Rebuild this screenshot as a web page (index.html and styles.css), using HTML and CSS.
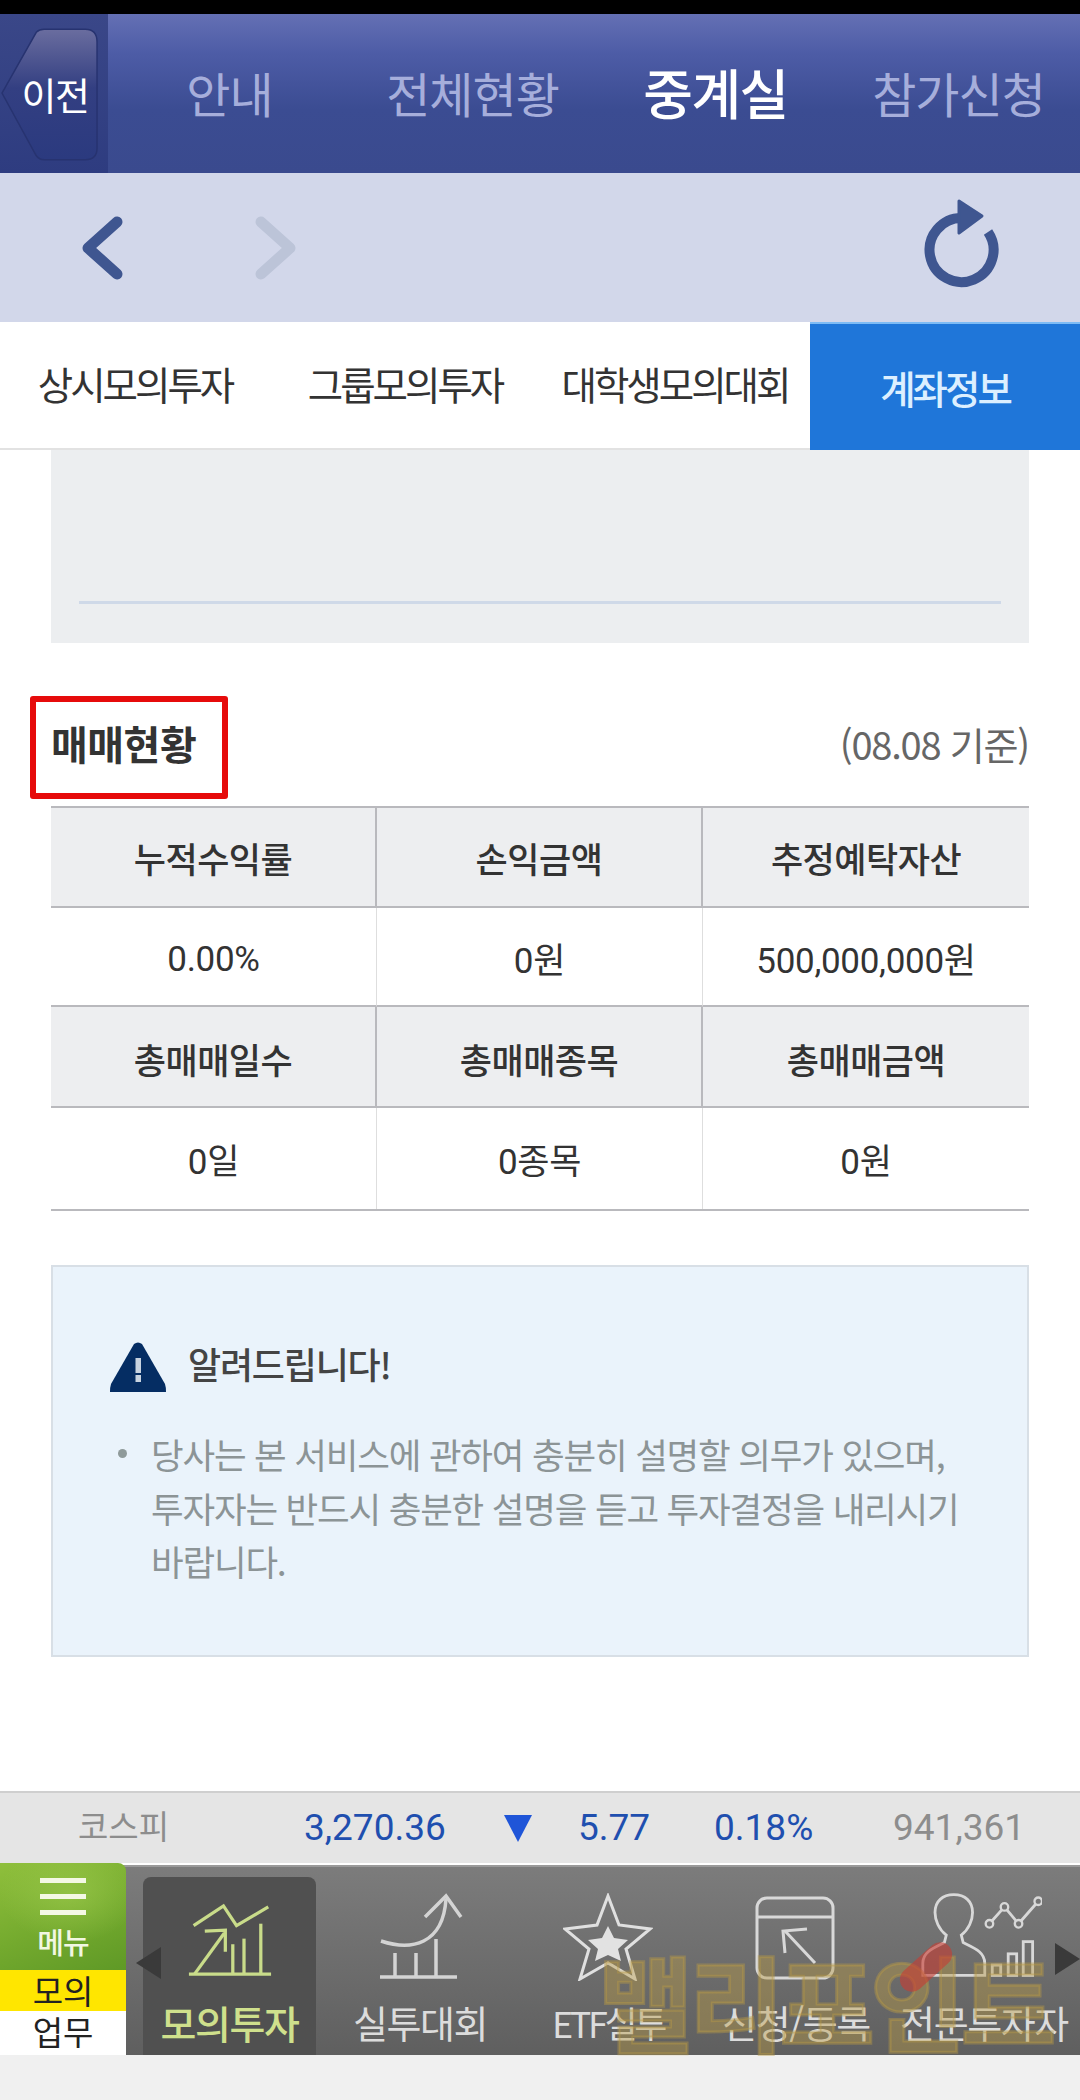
FILE: index.html
```html
<!DOCTYPE html>
<html lang="ko">
<head>
<meta charset="utf-8">
<title>중계실</title>
<link rel="stylesheet" href="styles.css">
</head>
<body>
<div class="page">
  <div class="statusbar"></div>
  <header class="topnav">
    <div class="backcell">
      <svg class="backshape" viewBox="0 0 100 136"><defs><linearGradient id="bg" x1="0" y1="0" x2="0" y2="1"><stop offset="0" stop-color="#6a6d9f"/><stop offset=".45" stop-color="#333f82"/><stop offset="1" stop-color="#2b3a7f"/></linearGradient></defs><path d="M1 66 L36 4 Q39 1 44 1 L86 1 Q98 1 98 14 L98 122 Q98 134 86 134 L44 134 Q39 134 36 130 Z" fill="url(#bg)" stroke="#273370" stroke-width="1.5"/></svg>
      <span class="backlabel">이전</span>
    </div>
    <span class="navitem">안내</span>
    <span class="navitem">전체현황</span>
    <span class="navitem navitem-on">중계실</span>
    <span class="navitem">참가신청</span>
  </header>
  <div class="toolbar">
    <svg class="chev" viewBox="0 0 44 64"><path d="M37 6 L8 32 L37 58" fill="none" stroke="#3f5690" stroke-width="11" stroke-linecap="round" stroke-linejoin="round"/></svg>
    <svg class="chev chev-next" viewBox="0 0 44 64"><path d="M7 6 L36 32 L7 58" fill="none" stroke="#bcc4d8" stroke-width="11" stroke-linecap="round" stroke-linejoin="round"/></svg>
    <svg class="refresh" viewBox="0 0 76 94"><path d="M38 21 A32 32 0 1 0 64 35" fill="none" stroke="#3f5690" stroke-width="10"/><path d="M35 4 L58 19 L35 36 Z" fill="#3f5690" stroke="#3f5690" stroke-width="3" stroke-linejoin="round"/></svg>
  </div>
  <nav class="tabs">
    <span class="tab">상시모의투자</span>
    <span class="tab">그룹모의투자</span>
    <span class="tab">대학생모의대회</span>
    <span class="tab tab-on">계좌정보</span>
  </nav>
  <main class="content">
    <div class="chartbox"><div class="chartline"></div></div>
    <div class="sectionhead">
      <h2 class="sectiontitle">매매현황</h2>
      <span class="asof">(08.08 기준)</span>
      <div class="redmark"></div>
    </div>
    <div class="stats">
      <div class="th">누적수익률</div><div class="th">손익금액</div><div class="th">추정예탁자산</div>
      <div class="td">0.00%</div><div class="td">0원</div><div class="td">500,000,000원</div>
      <div class="th">총매매일수</div><div class="th">총매매종목</div><div class="th">총매매금액</div>
      <div class="td">0일</div><div class="td">0종목</div><div class="td">0원</div>
    </div>
    <section class="notice">
      <div class="noticehead">
        <svg class="warn" viewBox="0 0 56 50"><path d="M24 2 Q28 -1 32 2 L55 42 Q56 45 56 50 L0 50 Q0 45 1 42 Z" fill="#052d63"/><rect x="25.5" y="16" width="5.5" height="15" fill="#c8d3e0"/><rect x="25.5" y="33" width="5.5" height="7" fill="#c8d3e0"/></svg>
        <strong class="noticetitle">알려드립니다!</strong>
      </div>
      <div class="noticebody">
        <span class="dot"></span>
        <p class="noticetext">당사는 본 서비스에 관하여 충분히 설명할 의무가 있으며, 투자자는 반드시 충분한 설명을 듣고 투자결정을 내리시기 바랍니다.</p>
      </div>
    </section>
  </main>
  <div class="ticker">
    <span class="tk tk-name">코스피</span>
    <span class="tk tk-idx">3,270.36</span>
    <span class="tk-down"></span>
    <span class="tk tk-chg">5.77</span>
    <span class="tk tk-pct">0.18%</span>
    <span class="tk tk-vol">941,361</span>
  </div>
  <div class="bottomnav">
    <div class="menucell">
      <div class="menugreen">
        <div class="burger"><i></i><i></i><i></i></div>
        <span class="menulabel">메뉴</span>
      </div>
      <div class="menuyellow">모의</div>
      <div class="menuwhite">업무</div>
    </div>
    <div class="navtabs">
      <div class="ntab ntab-on">
        <svg class="nicon" viewBox="0 0 90 80"><g fill="none" stroke="#c9dc8a" stroke-width="3.5"><path d="M1 76 H89"/><path d="M6 24 L38 3 L52 24 L86 4"/><path d="M7 76 L39 32"/><path d="M18 30 L40 29 L40 52"/><path d="M48 76 V44"/><path d="M60 76 V38"/><path d="M78 76 V22"/></g></svg>
        <span class="nlabel">모의투자</span>
      </div>
      <div class="ntab">
        <svg class="nicon" viewBox="0 0 90 88"><g fill="none" stroke="#d4d4d4" stroke-width="3.5"><path d="M5 84 H82"/><path d="M20 84 V60"/><path d="M41 84 V60"/><path d="M61 84 V46"/><path d="M6 48 C36 58 68 52 71 6"/><path d="M50 24 L71 3 L86 24"/></g></svg>
        <span class="nlabel">실투대회</span>
      </div>
      <div class="ntab">
        <svg class="nicon" viewBox="0 0 90 88"><path d="M45 3 L56 32 L87 36 L63 56 L72 86 L45 70 L17 86 L26 56 L2 36 L34 32 Z" fill="none" stroke="#e0e0e0" stroke-width="3"/><path d="M45 33 L51 45 L65 47 L55 56 L58 68 L45 62 L32 68 L35 56 L25 47 L39 45 Z" fill="#e2e2e2"/></svg>
        <span class="nlabel nlabel-tight">ETF실투</span>
      </div>
      <div class="ntab">
        <svg class="nicon" viewBox="0 0 90 88"><g fill="none" stroke="#d8d8d8" stroke-width="3"><rect x="6" y="5" width="76" height="80" rx="10"/><path d="M6 24 H82"/><path d="M64 70 L34 38"/><path d="M34 60 L32 38 L56 36"/></g></svg>
        <span class="nlabel">신청/등록</span>
      </div>
      <div class="ntab">
        <svg class="nicon nicon-wide" viewBox="0 0 130 90"><g fill="none" stroke="#d8d8d8" stroke-width="3"><path d="M3 87 V74 C3 62 14 58 26 52 L28 44 C20 38 16 28 16 20 C16 8 24 1 36 1 C48 1 56 8 56 20 C56 28 52 38 44 44 L46 52 C58 58 69 62 69 74 V87 Z"/><path d="M74 32 L90 14 L105 32 L126 8"/><rect x="77" y="76" width="9" height="11"/><rect x="94" y="64" width="9" height="23"/><rect x="110" y="51" width="10" height="36"/></g><g fill="#757575" stroke="#d8d8d8" stroke-width="2.5"><circle cx="74" cy="32" r="4"/><circle cx="90" cy="14" r="4"/><circle cx="105" cy="32" r="4"/><circle cx="126" cy="8" r="4"/></g></svg>
        <span class="nlabel">전문투자자</span>
      </div>
    </div>
    <span class="arrow arrow-l"></span>
    <span class="arrow arrow-r"></span>
    <div class="watermark">밸리포인트<span class="wmdot"></span></div>
  </div>
  <div class="softbar"></div>
</div>
</body>
</html>
```
FILE: styles.css
```css
* { box-sizing: border-box; }
html, body { margin: 0; padding: 0; }
body { background: #fff; font-family: "Noto Sans CJK KR", "Noto Sans", sans-serif; color: #333; }
.page { width: 1080px; height: 2100px; display: flex; flex-direction: column; overflow: hidden; }
.statusbar { height: 14px; background: #000; }

.topnav { height: 159px; display: flex; align-items: center; background: linear-gradient(#6470b4 0%, #4d5ca6 25%, #3b4c92 60%, #3a4a8e 100%); }
.backcell { position: relative; width: 108px; height: 100%; background: linear-gradient(#3a4788, #2e3c80); flex: none; }
.backshape { position: absolute; left: 1px; top: 14px; width: 98px; height: 134px; }
.backlabel { position: absolute; left: 0; width: 110px; top: 55px; text-align: center; color: #fff; font-size: 38px; line-height: 50px; letter-spacing: -1.5px; }
.navitem { flex: none; width: 243px; text-align: center; font-size: 48px; line-height: 60px; color: #a6aedb; letter-spacing: -1px; position: relative; top: -2px; }
.navitem-on { color: #fff; font-size: 54px; font-weight: 500; letter-spacing: -1.5px; }

.toolbar { height: 149px; background: #d2d7ea; display: flex; align-items: center; }
.chev { width: 44px; height: 64px; margin-left: 80px; position: relative; top: 0; }
.chev-next { margin-left: 130px; }
.refresh { width: 76px; height: 94px; margin-left: auto; margin-right: 80px; position: relative; top: -4px; }

.tabs { height: 128px; display: flex; border-bottom: 2px solid #e2e2e2; }
.tab { flex: 1 1 0; display: flex; align-items: center; justify-content: center; font-size: 38.5px; letter-spacing: -3px; color: #333; position: relative; top: -2px; }
.tab-on { background: #1f76d9; color: #dcefff; font-weight: 500; border-top: 2px solid #7dbbf5; margin-bottom: -2px; top: 0; }

.content { flex: 1 1 0; padding: 0 51px; position: relative; }
.chartbox { height: 193px; background: #eceef0; padding: 151px 28px 0; }
.chartline { height: 3px; background: #cfd9e8; }
.sectionhead { position: relative; height: 163px; display: flex; justify-content: space-between; align-items: center; padding-top: 50px; padding-bottom: 14px; }
.sectiontitle { margin: 0; font-size: 40px; font-weight: 700; color: #333; letter-spacing: -0.5px; line-height: 50px; }
.asof { font-size: 38px; letter-spacing: -1.2px; color: #666; line-height: 50px; position: relative; top: 1px; }
.redmark { position: absolute; left: -21px; top: 53px; width: 198px; height: 103px; border: 6px solid #e60b0b; border-radius: 3px; }

.stats { display: grid; grid-template-columns: 326px 326px 326px; grid-template-rows: 100px 99px 101px 101px; border-top: 2px solid #b9b9bd; border-bottom: 2px solid #b9b9bd; }
.th, .td { display: flex; align-items: center; justify-content: center; }
.th { background: #edeef0; border-bottom: 2px solid #b9b9bd; font-size: 35px; font-weight: 500; color: #333; letter-spacing: -0.5px; }
.td { font-size: 35px; color: #333; font-family: Roboto, "Noto Sans CJK KR", sans-serif; letter-spacing: -0.3px; }
.td:nth-child(-n+6) { border-bottom: 2px solid #b9b9bd; }
.td:nth-child(4) { padding-top: 5px; }
.td:nth-child(5), .td:nth-child(6) { padding-top: 2px; }
.th:nth-child(n+7) { padding-top: 3px; }
.th:not(:nth-child(3n)) { border-right: 2px solid #b9b9bd; }
.td:not(:nth-child(3n)) { border-right: 1px solid #dedede; }

.notice { margin-top: 54px; height: 392px; background: #eaf3fb; border: 2px solid #d8dfe6; padding: 75px 57px 0; }
.noticehead { display: flex; align-items: center; gap: 22px; }
.warn { width: 56px; height: 50px; flex: none; }
.noticetitle { font-size: 36px; font-weight: 500; color: #444; letter-spacing: -1.2px; line-height: 50px; position: relative; top: -4px; }
.noticebody { display: flex; margin-top: 35px; }
.dot { width: 9px; height: 9px; border-radius: 50%; background: #8f9a9a; margin: 22px 24px 0 8px; flex: none; }
.noticetext { margin: 0; width: 825px; font-size: 35.5px; line-height: 53.5px; color: #8c9496; letter-spacing: -1.2px; }

.ticker { height: 72px; background: #e5e5e5; border-top: 2px solid #cfcfcf; position: relative; display: flex; align-items: center; }
.tk { font-family: Roboto, "Noto Sans CJK KR", sans-serif; font-size: 37px; line-height: 40px; color: #1f4faf; white-space: nowrap; flex: none; }
.tk-name { color: #8d8d8d; margin-left: 78px; width: 226px; font-size: 33px; }
.tk-down { width: 0; height: 0; flex: none; border-left: 14px solid transparent; border-right: 14px solid transparent; border-top: 27px solid #1f55d8; }
.tk-idx { width: 200px; }
.tk-chg { margin-left: 46px; width: 136px; }
.tk-pct { width: 179px; }
.tk-vol { color: #8d8d8d; }

.bottomnav { height: 192px; border-top: 2px solid #fff; background: linear-gradient(#7c7c7c, #5f5f5f); display: flex; position: relative; overflow: visible; box-shadow: inset 0 2px 0 #9a9a9a; }
.menucell { width: 126px; flex: none; display: flex; flex-direction: column; text-align: center; border-top-right-radius: 8px; overflow: hidden; margin-top: -2px; }
.menugreen { height: 107px; background: radial-gradient(ellipse 70px 50px at 70px 30px, rgba(160,205,80,.55), rgba(160,205,80,0) 100%), linear-gradient(160deg, #8fbf3c, #74aa2e 55%, #5f9926); display: flex; flex-direction: column; align-items: center; padding-top: 15px; }
.burger { width: 46px; display: flex; flex-direction: column; gap: 11px; }
.burger i { display: block; height: 5px; background: #f4f8e4; }
.menulabel { color: #f2f7e2; font-size: 29px; line-height: 32px; margin-top: 10px; font-weight: 500; letter-spacing: -1px; }
.menuyellow { height: 41px; background: #ffe600; color: #222; font-size: 33px; line-height: 40px; }
.menuwhite { height: 44px; background: #fff; color: #222; font-size: 33px; line-height: 41px; }
.navtabs { display: flex; margin-left: 9px; overflow: hidden; flex: 1 1 0; }
.ntab { width: 188px; flex: none; display: flex; flex-direction: column; align-items: center; position: relative; padding-top: 28px; }
.ntab-on { width: 173px; margin: 12px 10px 0 8px; background: #505050; border-radius: 8px 8px 0 0; padding-top: 26px; }
.nicon { width: 90px; height: 88px; flex: none; }
.ntab-on .nicon { width: 84px; height: 75px; }
.nicon-wide { width: 122px; height: 86px; position: relative; left: -3px; }
.nlabel { font-size: 38px; line-height: 44px; color: #dcdcdc; letter-spacing: -1.4px; white-space: nowrap; position: absolute; top: 135px; left: 50%; transform: translateX(-50%); }
.ntab-on .nlabel { color: #cfe08c; top: 123px; font-weight: 500; font-size: 39px; }
.nlabel-tight { font-size: 36px; letter-spacing: -3.4px; }
.arrow { position: absolute; top: 82px; width: 0; height: 0; border-top: 16px solid transparent; border-bottom: 16px solid transparent; }
.arrow-l { left: 136px; border-right: 25px solid #3a3a3a; }
.arrow-r { right: 0; top: 78px; border-left: 25px solid #3a3a3a; }
.watermark { position: absolute; left: 598px; top: 70px; font-size: 104px; line-height: 130px; font-weight: 700; color: rgba(185,155,70,.42); letter-spacing: -5px; white-space: nowrap; pointer-events: none; -webkit-text-stroke: 3px rgba(185,155,70,.42); }
.wmdot { position: absolute; left: 297px; top: 20px; width: 62px; height: 24px; border-radius: 12px; background: rgba(200,60,50,.6); transform: rotate(-42deg); -webkit-text-stroke: 0; }
.softbar { height: 45px; background: #f0f0f0; }
```
